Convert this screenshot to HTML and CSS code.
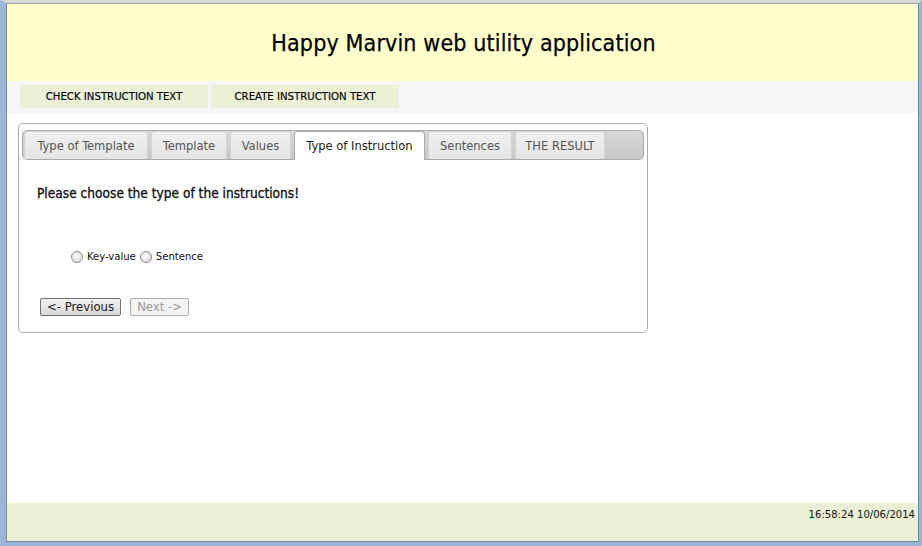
FILE: index.html
```html
<!DOCTYPE html>
<html>
<head>
<meta charset="utf-8">
<link rel="stylesheet" href="styles.css">
</head>
<body>
<div class="frame">
  <div class="page">
    <header class="header"><h1 class="title">Happy Marvin web utility application</h1></header>
    <nav class="nav">
      <a class="nav-btn nav-first">CHECK INSTRUCTION TEXT</a>
      <a class="nav-btn">CREATE INSTRUCTION TEXT</a>
    </nav>
    <main class="main">
      <div class="tabs">
        <ul class="tab-bar">
          <li class="tab t1">Type of Template</li>
          <li class="tab t2">Template</li>
          <li class="tab t3">Values</li>
          <li class="tab active t4">Type of Instruction</li>
          <li class="tab t5">Sentences</li>
          <li class="tab t6">THE RESULT</li>
        </ul>
        <div class="panel">
          <p class="question">Please choose the type of the instructions!</p>
          <div class="radios">
            <label class="radio"><span class="dot"></span>Key-value</label>
            <label class="radio"><span class="dot"></span>Sentence</label>
          </div>
          <div class="buttons">
            <button class="btn">&lt;- Previous</button>
            <button class="btn disabled">Next -&gt;</button>
          </div>
        </div>
      </div>
    </main>
    <footer class="footer">16:58:24 10/06/2014</footer>
  </div>
</div>
</body>
</html>
```
FILE: styles.css
```css
html, body { margin: 0; padding: 0; }
body { width: 922px; height: 546px; overflow: hidden; background: #c9d6e6; }
.frame {
  box-sizing: border-box;
  width: 922px; height: 546px;
  border-left: 6px solid #9db6d6;
  border-right: 3px solid #9db6d6;
  border-bottom: 4px solid #9db6d6;
  border-top: 3px solid #d6d6d6;
  background: #fff;
}
.page {
  box-sizing: border-box;
  height: 100%;
  border-left: 1px solid #6f88a8;
  border-right: 1px solid #6f88a8;
  border-bottom: 1px solid #6f88a8;
  border-top: 1px solid #a0a0a0;
  display: flex; flex-direction: column;
  font-family: "DejaVu Sans Condensed", "DejaVu Sans", sans-serif;
}
.header { height: 77px; background: #ffffcc; display: flex; align-items: center; justify-content: center; }
.title { margin: 0; font-weight: normal; font-size: 23px; color: #000; padding: 0 0 0 2px; letter-spacing: 0.15px; -webkit-text-stroke: 0.25px #000; }
.nav { height: 32px; background: #f6f6f6; display: flex; gap: 3px; padding: 4px 0 0 13px; box-sizing: border-box; }
.nav-btn { width: 188px; height: 23px; background: #ebf0d6; font-size: 11.3px; color: #000; display: flex; align-items: center; justify-content: center; -webkit-text-stroke: 0.15px #000; }
.main { flex: 1; padding: 10px 0 0 11px; }
.tabs {
  width: 622px; height: 202px;
  border: 1px solid #aaaaaa; border-radius: 5px;
  padding: 6px 3px 0 3px; box-sizing: content-box;
}
.tab-bar {
  list-style: none; margin: 0; padding: 0 0 0 1px;
  height: 30px; box-sizing: border-box;
  border: 1px solid #aaaaaa; border-radius: 5px;
  background: linear-gradient(#d8d8d8, #c8c8c8);
  display: flex; align-items: flex-start; gap: 3px;
}
.tab {
  height: 28px; box-sizing: border-box;
  border: 1px solid #d3d3d3; border-bottom: none;
  border-radius: 4px 4px 0 0;
  background: linear-gradient(#f0f0f0, #e4e4e4);
  font-size: 12.8px; color: #555;
  display: flex; align-items: center; justify-content: center;
  padding-bottom: 1px;
}
.tab.active { background: #fff; color: #212121; border-color: #aaaaaa; height: 29px; margin-bottom: -1px; position: relative; }
.t1 { width: 124px; } .t2 { width: 76px; } .t3 { width: 61px; } .t4 { width: 131px; } .t5 { width: 84px; } .t6 { width: 90px; }
.panel { padding: 25px 0 0 15px; }
.question { margin: 0; font-size: 13.6px; color: #111; -webkit-text-stroke: 0.3px #111; }
.radios { display: flex; gap: 4px; margin: 49px 0 0 34px; }
.radio { display: flex; align-items: center; font-size: 11.2px; color: #111; }
.dot {
  width: 12px; height: 12px; border-radius: 50%; margin-right: 4px; box-sizing: border-box;
  border: 1px solid #8a8a8a; background: radial-gradient(circle at 40% 40%, #fff, #d0d0d0);
}
.buttons { display: flex; gap: 9px; margin: 35px 0 0 3px; }
.btn {
  height: 18px; padding: 0 6px; font-family: "DejaVu Sans", sans-serif; font-size: 11.7px; color: #222;
  border: 1px solid #707070; border-radius: 2px; background: linear-gradient(#f2f2f2, #d8d8d8);
  line-height: 15px;
}
.btn.disabled { color: #999; border-color: #adadad; background: #f4f4f4; }
.footer {
  height: 38px; background: #ebf0d6; font-size: 11.2px; color: #111;
  display: flex; justify-content: flex-end; padding: 5px 3px 0 0; box-sizing: border-box;
}
```
